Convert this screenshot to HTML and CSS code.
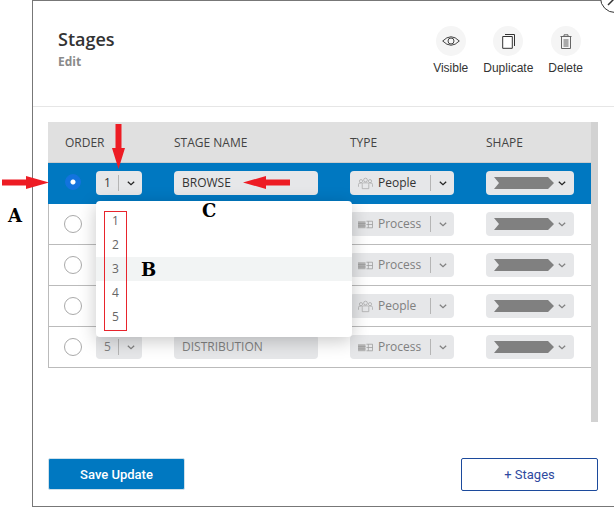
FILE: index.html
```html
<!DOCTYPE html>
<html lang="en">
<head>
<meta charset="utf-8">
<title>Stages</title>
<link rel="stylesheet" href="styles.css">
</head>
<body>
<svg width="0" height="0" class="defs">
  <symbol id="chev" viewBox="0 0 8 5"><path d="M.8.8 4 3.800 7.200.8" fill="none" stroke="currentColor" stroke-width="1.200"/></symbol>
  <symbol id="people" viewBox="0 0 16 13"><g fill="none" stroke="#a8a8a8" stroke-width=".8"><circle cx="3.200" cy="4" r="1.700"/><circle cx="12.800" cy="4" r="1.700"/><circle cx="8" cy="2.800" r="2"/><path d="M.5 10V7.500q0-1.300 1.500-1.500h2.200M15.500 10V7.500q0-1.300-1.500-1.500h-2.200M4.500 12V7.500q0-1.500 1.500-1.700h4q1.500.2 1.500 1.700V12z"/></g></symbol>
  <symbol id="process" viewBox="0 0 16 9"><path d="M0 1h8v7.500H0z" fill="#b4b4b4"/><path d="M0 3.500h8M0 6h8M9 1h6.500M9 4.500h6.500M9 8h6.500M11 1v7M15.500 1v7" fill="none" stroke="#9a9a9a" stroke-width=".8"/></symbol>
  <symbol id="shape" viewBox="0 0 60 12"><path d="M0 0h54l6 6-6 6H0l5-6z" fill="#808080"/></symbol>
</svg>

<main class="modal">
  <header class="head">
    <div>
      <h1 class="title">Stages</h1>
      <div class="sub">Edit</div>
    </div>
    <div class="tools">
      <div class="tool">
        <span class="tool-ic"><svg width="18" height="10" viewBox="0 0 18 10"><path d="M.7 5Q9-3.500 17.300 5 9 13.500.7 5z" fill="none" stroke="#444"/><circle cx="9" cy="5" r="3" fill="none" stroke="#444"/></svg></span>
        <span>Visible</span>
      </div>
      <div class="tool">
        <span class="tool-ic"><svg width="13" height="15" viewBox="0 0 13 15"><path d="M3 .5h9.500V12" fill="none" stroke="#333"/><path d="M.7 2.500h9.600v11.800H.7z" fill="#fff" stroke="#333"/></svg></span>
        <span>Duplicate</span>
      </div>
      <div class="tool">
        <span class="tool-ic"><svg width="12" height="15" viewBox="0 0 12 15"><path d="M.5 2.500h11M4 2.500V.8h4v1.700" fill="none" stroke="#666"/><path d="M1.500 2.500h9v12h-9z" fill="none" stroke="#666"/><rect x="3.500" y="5" width="5" height="8" fill="#aaa"/></svg></span>
        <span>Delete</span>
      </div>
    </div>
  </header>

  <section class="table-wrap">
    <div class="table">
      <div class="row row-head">
        <div>ORDER</div>
        <div>STAGE NAME</div>
        <div>TYPE</div>
        <div>SHAPE</div>
      </div>

      <div class="row row-on">
        <span class="radio radio-on"></span>
        <div class="pill p-order"><span class="val">1</span><i class="sep"></i><svg class="chev"><use href="#chev"/></svg></div>
        <div class="pill p-name">BROWSE</div>
        <div class="pill p-type"><svg class="ic-people"><use href="#people"/></svg><span class="val">People</span><i class="sep"></i><svg class="chev"><use href="#chev"/></svg></div>
        <div class="pill p-shape"><svg class="ic-shape"><use href="#shape"/></svg><svg class="chev"><use href="#chev"/></svg></div>
      </div>

      <div class="row">
        <span class="radio"></span>
        <div class="pill p-order"></div>
        <div class="pill p-name"></div>
        <div class="pill p-type"><svg class="ic-process"><use href="#process"/></svg><span class="val">Process</span><i class="sep"></i><svg class="chev"><use href="#chev"/></svg></div>
        <div class="pill p-shape"><svg class="ic-shape"><use href="#shape"/></svg><svg class="chev"><use href="#chev"/></svg></div>
      </div>

      <div class="row">
        <span class="radio"></span>
        <div class="pill p-order"></div>
        <div class="pill p-name"></div>
        <div class="pill p-type"><svg class="ic-process"><use href="#process"/></svg><span class="val">Process</span><i class="sep"></i><svg class="chev"><use href="#chev"/></svg></div>
        <div class="pill p-shape"><svg class="ic-shape"><use href="#shape"/></svg><svg class="chev"><use href="#chev"/></svg></div>
      </div>

      <div class="row">
        <span class="radio"></span>
        <div class="pill p-order"></div>
        <div class="pill p-name"></div>
        <div class="pill p-type"><svg class="ic-people"><use href="#people"/></svg><span class="val">People</span><i class="sep"></i><svg class="chev"><use href="#chev"/></svg></div>
        <div class="pill p-shape"><svg class="ic-shape"><use href="#shape"/></svg><svg class="chev"><use href="#chev"/></svg></div>
      </div>

      <div class="row">
        <span class="radio"></span>
        <div class="pill p-order"><span class="val">5</span><i class="sep"></i><svg class="chev"><use href="#chev"/></svg></div>
        <div class="pill p-name">DISTRIBUTION</div>
        <div class="pill p-type"><svg class="ic-process"><use href="#process"/></svg><span class="val">Process</span><i class="sep"></i><svg class="chev"><use href="#chev"/></svg></div>
        <div class="pill p-shape"><svg class="ic-shape"><use href="#shape"/></svg><svg class="chev"><use href="#chev"/></svg></div>
      </div>
    </div>
    <div class="scroll"></div>
  </section>

  <footer class="foot">
    <button class="btn btn-solid">Save Update</button>
    <button class="btn btn-line">+ Stages</button>
  </footer>
</main>

<ul class="menu">
  <li>1</li>
  <li>2</li>
  <li class="hover">3</li>
  <li>4</li>
  <li>5</li>
</ul>
<div class="note-box"></div>
<span class="close"><svg width="30" height="30" viewBox="0 0 30 30"><path d="M8 8l14 14M22 8 8 22" stroke="#333" stroke-width="1.500"/></svg></span>

<svg class="arrow arrow-a" width="47" height="13" viewBox="0 0 47 13"><path d="M0 3.500h24V0l23 6.500L24 13V9.500H0z" fill="#ed1c24"/></svg>
<svg class="arrow arrow-b" width="13" height="45" viewBox="0 0 13 45"><path d="M3.500 0h6v24H13L6.500 45 0 24h3.500z" fill="#ed1c24"/></svg>
<svg class="arrow arrow-c" width="47" height="13" viewBox="0 0 47 13"><path d="M47 3.500H23V0L0 6.500 23 13V9.500h24z" fill="#ed1c24"/></svg>
<span class="mark mark-a">A</span>
<span class="mark mark-b">B</span>
<span class="mark mark-c">C</span>
</body>
</html>
```

FILE: styles.css
```css
* { box-sizing: border-box; }
html, body { margin: 0; height: 507px; overflow: hidden; background: #fff; }
body { position: relative; font-family: "Open Sans", sans-serif; color: #333; }
.defs { position: absolute; }

.modal {
  margin-left: 32px;
  height: 507px;
  border: 1px solid #777;
  border-right: 0;
  background: #fff;
}

.head {
  height: 106px;
  display: flex;
  justify-content: space-between;
  padding: 25px 31px 0 25px;
  border-bottom: 1px solid #e6e6e6;
}
.title { margin: 1px 0 0; font-size: 18px; line-height: 24px; font-weight: 600; color: #333; }
.sub { margin-top: 3px; font-size: 12px; line-height: 16px; font-weight: 700; color: #8a8a8a; }

.tools { display: flex; gap: 15px; font-family: "Liberation Sans", sans-serif; font-size: 12px; color: #333; }
.tool { display: flex; flex-direction: column; align-items: center; gap: 5px; line-height: 14px; }
.tool-ic { width: 30px; height: 30px; border-radius: 50%; background: #f5f5f5; display: flex; align-items: center; justify-content: center; }

.table-wrap { display: flex; margin: 15px 0 0 15px; width: 550px; height: 300px; }
.table { width: 543px; height: 246px; border-left: 1px solid #bbb; }
.scroll { width: 7px; background: #d2d2d2; }

.row {
  display: grid;
  grid-template-columns: 32px 78px 176px 136px 101px;
  align-items: start;
  height: 41px;
  padding: 8px 0 0 15px;
  border-bottom: 1px solid #bbb;
  font-size: 12px;
}
.row-head { margin-left: -1px; padding: 13px 0 0 17px; background: #e0e0e0; border-bottom-color: #ccc; line-height: 16px; color: #444; grid-template-columns: 109px 176px 136px 101px; }
.row-on { background: #0078c1; border-bottom-color: #0078c1; margin-left: -1px; padding-left: 16px; }

.radio { width: 18px; height: 18px; margin-top: 3px; border: 1px solid #aaa; border-radius: 50%; background: #fff; }
.radio-on { background: radial-gradient(circle, #fff 0 2px, #1273de 3px); border-color: #1273de; width: 16px; height: 16px; margin: 3px 0 0 1px; }

.pill {
  display: flex;
  align-items: center;
  height: 24px;
  border-radius: 4px;
  background: #e6e7e9;
  color: #808080;
  line-height: 22px;
}
.row-on .pill { color: #333; }
.row-on .chev { color: #222; }
.val { font-size: 12px; margin-top: -1px; }
.sep { width: 1px; height: 16px; background: #b5b5b5; }
.chev { width: 8px; height: 5px; color: #808080; flex: none; }

.p-order { width: 46px; padding-left: 8px; }
.p-order .val { width: 14px; }
.p-order .chev { margin-left: 8px; }
.p-name { width: 144px; padding-left: 8px; }
.p-type { width: 104px; padding-left: 8px; }
.p-type .val { width: 52px; margin-left: 5px; }
.p-type .chev { margin-left: 8px; }
.ic-people { width: 15px; height: 13px; flex: none; }
.ic-process { width: 15px; height: 9px; flex: none; }
.p-shape { width: 88px; padding-left: 8px; }
.ic-shape { width: 60px; height: 12px; flex: none; }
.p-shape .chev { margin-left: 4px; }

.foot { display: flex; justify-content: space-between; width: 550px; margin: 36px 0 0 15px; }
.btn { width: 137px; font-family: Roboto, sans-serif; font-size: 13px; font-weight: 500; padding: 0; border-radius: 2px; }
.btn-solid { height: 32px; background: #0078c1; border: 1px solid #cfe0ea; color: #fff; }
.btn-line { height: 33px; background: #fff; border: 1px solid #1c4a9c; color: #2f4aa0; font-weight: 400; }

.menu {
  position: absolute;
  left: 96px;
  top: 201px;
  width: 256px;
  height: 136px;
  margin: 0;
  padding: 8px 0;
  list-style: none;
  background: #fff;
  border-radius: 4px;
  box-shadow: 0 4px 18px rgba(0, 0, 0, .22);
  font-size: 12px;
  color: #666;
}
.menu li { height: 24px; line-height: 24px; padding-left: 16px; }
.menu .hover { background: #f2f4f4; }
.note-box { position: absolute; left: 104px; top: 211px; width: 23px; height: 120px; border: 1px solid #e8242c; }

.close { position: absolute; left: 600px; top: -17px; width: 30px; height: 30px; border: 1px solid #333; border-radius: 50%; background: #fff; }
.close svg { display: block; margin: -1px; }

.arrow { position: absolute; }
.arrow-a { left: 2px; top: 176px; }
.arrow-b { left: 112px; top: 124px; }
.arrow-c { left: 243px; top: 176px; }

.mark { position: absolute; font-family: "DejaVu Serif", serif; font-weight: 700; font-size: 18px; line-height: 20px; color: #000; }
.mark-a { left: 8px; top: 206px; }
.mark-b { left: 141px; top: 260px; }
.mark-c { left: 202px; top: 201px; }
```
